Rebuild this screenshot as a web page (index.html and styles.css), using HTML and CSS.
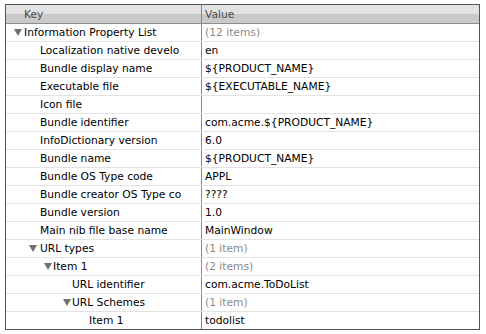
FILE: index.html
```html
<!DOCTYPE html>
<html lang="en">
  <head>
    <meta charset="UTF-8" />
    <title>Info.plist</title>
    <link rel="stylesheet" href="styles.css">
  </head>
  <body>
    <div class="plist">
      <div class="head">
        <div class="key">Key</div>
        <div class="value">Value</div>
      </div>

      <div class="row">
        <div class="key lvl0"><svg class="tri" viewBox="0 0 8 7"><polygon points="0,0 8,0 4,7"/></svg>Information Property List</div>
        <div class="value muted">(12 items)</div>
      </div>
      <div class="row">
        <div class="key lvl1">Localization native develo</div>
        <div class="value">en</div>
      </div>
      <div class="row">
        <div class="key lvl1">Bundle display name</div>
        <div class="value">${PRODUCT_NAME}</div>
      </div>
      <div class="row">
        <div class="key lvl1">Executable file</div>
        <div class="value">${EXECUTABLE_NAME}</div>
      </div>
      <div class="row">
        <div class="key lvl1">Icon file</div>
        <div class="value"></div>
      </div>
      <div class="row">
        <div class="key lvl1">Bundle identifier</div>
        <div class="value">com.acme.${PRODUCT_NAME}</div>
      </div>
      <div class="row">
        <div class="key lvl1">InfoDictionary version</div>
        <div class="value">6.0</div>
      </div>
      <div class="row">
        <div class="key lvl1">Bundle name</div>
        <div class="value">${PRODUCT_NAME}</div>
      </div>
      <div class="row">
        <div class="key lvl1">Bundle OS Type code</div>
        <div class="value">APPL</div>
      </div>
      <div class="row">
        <div class="key lvl1">Bundle creator OS Type co</div>
        <div class="value">????</div>
      </div>
      <div class="row">
        <div class="key lvl1">Bundle version</div>
        <div class="value">1.0</div>
      </div>
      <div class="row">
        <div class="key lvl1">Main nib file base name</div>
        <div class="value">MainWindow</div>
      </div>
      <div class="row">
        <div class="key lvl1"><svg class="tri" viewBox="0 0 8 7"><polygon points="0,0 8,0 4,7"/></svg>URL types</div>
        <div class="value muted">(1 item)</div>
      </div>
      <div class="row">
        <div class="key lvl2"><svg class="tri" viewBox="0 0 8 7"><polygon points="0,0 8,0 4,7"/></svg>Item 1</div>
        <div class="value muted">(2 items)</div>
      </div>
      <div class="row">
        <div class="key lvl3">URL identifier</div>
        <div class="value">com.acme.ToDoList</div>
      </div>
      <div class="row">
        <div class="key lvl3"><svg class="tri" viewBox="0 0 8 7"><polygon points="0,0 8,0 4,7"/></svg>URL Schemes</div>
        <div class="value muted">(1 item)</div>
      </div>
      <div class="row last">
        <div class="key lvl4">Item 1</div>
        <div class="value">todolist</div>
      </div>
    </div>
  </body>
</html>
```

FILE: styles.css
```css
body {
  margin: 0;
  background: #fff;
  font-family: "DejaVu Sans", sans-serif;
  font-size: 10.7px;
  color: #000;
}

.plist {
  margin: 4px 0 0 5px;
  width: 473px;
  border: 1px solid #555;
}

.head,
.row {
  display: grid;
  grid-template-columns: 196px 1fr;
}

.head {
  height: 18px;
  background: linear-gradient(#e2e2e2 0, #e2e2e2 50%, #c9c9c9 50%, #c9c9c9 100%);
  border-bottom: 1px solid #8d8d8d;
  color: #4b4b4b;
}

.row {
  height: 17px;
  border-bottom: 1px solid #e2e2e2;
}

.row.last {
  border-bottom: none;
}

.key,
.value {
  display: flex;
  align-items: center;
  white-space: nowrap;
  overflow: hidden;
}

.key {
  border-right: 1px solid #8a8a8a;
}

.head .key {
  padding-left: 18px;
}

.value {
  padding-left: 3px;
}

.muted {
  color: #8a8a8a;
}

.tri {
  width: 8px;
  height: 7px;
  fill: #707070;
  margin-right: 3px;
  flex: none;
}

.lvl0 {
  padding-left: 8px;
}

.lvl0 .tri {
  margin-right: 2px;
}

.lvl1 {
  padding-left: 34px;
}

.lvl1 .tri {
  margin: 0 3px 0 -11px;
}

.lvl2 {
  padding-left: 38px;
}

.lvl2 .tri {
  margin-right: 1px;
}

.lvl3 {
  padding-left: 66px;
}

.lvl3 .tri {
  margin: 0 1px 0 -9px;
}

.lvl4 {
  padding-left: 83px;
}
```
